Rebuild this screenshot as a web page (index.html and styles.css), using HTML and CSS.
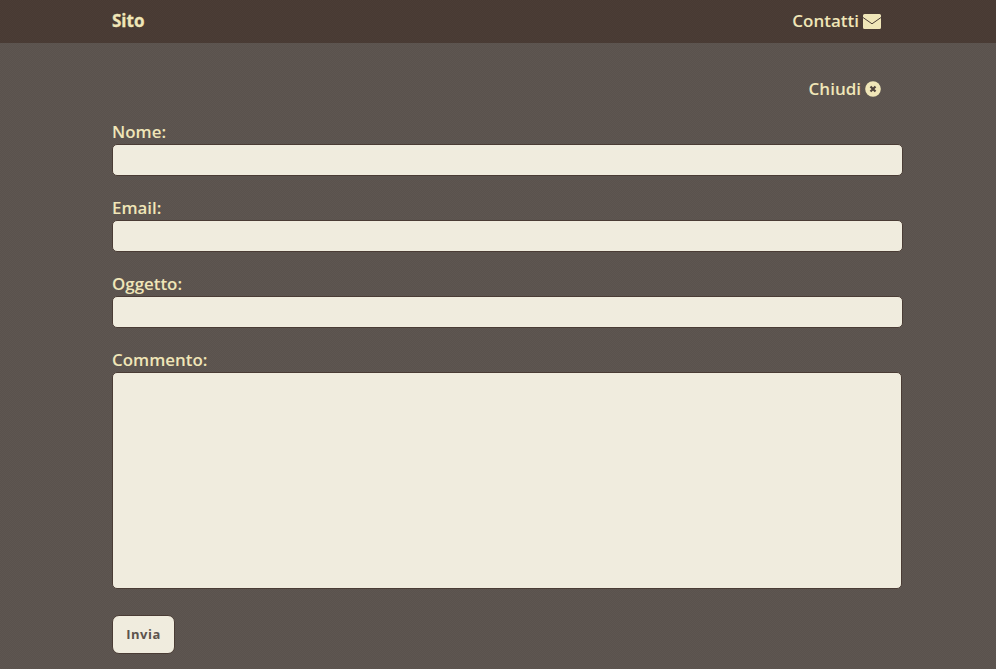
FILE: index.html
```html
<!DOCTYPE html>
<html lang="it">
<head>
<meta charset="utf-8">
<title>Sito</title>
<link rel="stylesheet" href="styles.css">
</head>
<body>
<header class="topbar">
  <a class="brand" href="#">Sito</a>
  <a class="navlink" href="#">Contatti
    <svg class="mail" viewBox="0 0 18 15" aria-hidden="true"><path class="mail-body" d="M1.500 0h15A1.500 1.500 0 0 1 18 1.500V13.500A1.500 1.500 0 0 1 16.500 15H1.500A1.500 1.500 0 0 1 0 13.500V1.500A1.500 1.500 0 0 1 1.500 0Z"/><path class="mail-line" d="M0 3.500 9 9.800 18 3.500"/></svg>
  </a>
</header>
<main class="content">
  <div class="close-row">
    <a class="navlink" href="#">Chiudi
      <svg class="xicon" viewBox="0 0 16 16" aria-hidden="true"><circle class="x-disc" cx="8" cy="8" r="7.800"/><path class="x-mark" d="M5.500 5.500 10.500 10.500M10.500 5.500 5.500 10.500"/></svg>
    </a>
  </div>
  <form class="form">
    <label class="label" for="n">Nome:</label>
    <input class="field" id="n" type="text">
    <label class="label" for="e">Email:</label>
    <input class="field" id="e" type="text">
    <label class="label" for="o">Oggetto:</label>
    <input class="field" id="o" type="text">
    <label class="label" for="c">Commento:</label>
    <textarea class="area" id="c"></textarea>
    <button class="submit" type="button">Invia</button>
  </form>
</main>
</body>
</html>
```
FILE: styles.css
```css
* { box-sizing: border-box; }
html, body { margin: 0; height: 100%; overflow: hidden; }
body {
  background: repeating-conic-gradient(#5a524d 0 25%, #5e5651 0 50%) 0 0 / 2px 2px;
  color: #f0e6b8;
  font-family: "Open Sans", sans-serif;
  font-size: 17px;
}
a { color: inherit; text-decoration: none; }
.topbar {
  height: 43px;
  background: repeating-conic-gradient(#483a33 0 25%, #4b3d36 0 50%) 0 0 / 2px 2px;
  padding: 0 115px 2px 112px;
  display: flex;
  align-items: center;
  justify-content: space-between;
}
.brand { font-weight: 700; font-size: 17px; line-height: 23px; -webkit-text-stroke: 0.300px #f0e6b8; }
.navlink {
  display: flex;
  align-items: center;
  gap: 4px;
  font-weight: 600;
  font-size: 17px;
  line-height: 23px;
}
.mail { width: 18px; height: 15px; display: block; margin-top: 2px; }
.mail-body { fill: #f0e6b8; }
.mail-line { fill: none; stroke: #4a3c35; stroke-width: 1; }
.xicon { width: 16px; height: 16px; display: block; margin-top: 1px; }
.x-disc { fill: #f0e6b8; }
.x-mark { fill: none; stroke: #4f433c; stroke-width: 2.200; }
.content { padding: 34px 93px 0 112px; }
.close-row {
  display: flex;
  justify-content: flex-end;
  padding-right: 22px;
  margin-bottom: 21px;
}
.form { display: flex; flex-direction: column; align-items: flex-start; }
.label {
  font-weight: 600;
  font-size: 16.900px;
  line-height: 21px;
  height: 23px;
}
.field, .area {
  display: block;
  background: #f0ecde;
  border: 1px solid #4a3c35;
  border-radius: 5px;
  outline: none;
  padding: 0;
}
.field { width: 791px; height: 32px; margin-bottom: 21px; }
.area { width: 790px; height: 217px; margin-bottom: 26px; resize: none; }
.submit {
  width: 63px;
  height: 39px;
  background: #f0ecde;
  border: 1px solid #4a3c35;
  border-radius: 7px;
  color: #5c534d;
  font-family: "Open Sans", sans-serif;
  font-weight: 700;
  font-size: 13px;
  letter-spacing: 0.500px;
  padding: 0 0 2px;
}
```
